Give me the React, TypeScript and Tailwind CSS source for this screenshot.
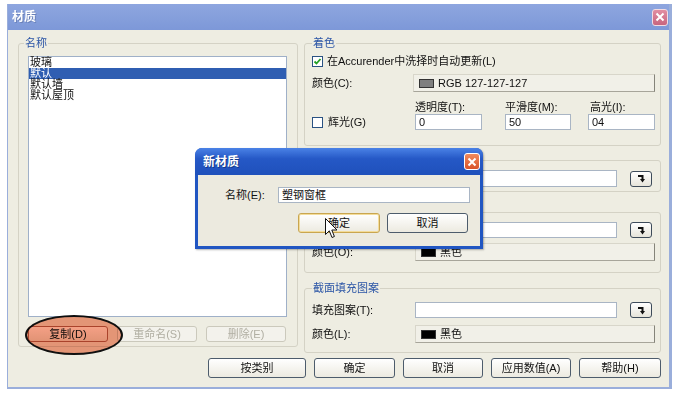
import type { ReactNode } from "react";

function Btn({
  children,
  className = "",
  disabled = false,
  focus = false,
}: {
  children: ReactNode;
  className?: string;
  disabled?: boolean;
  focus?: boolean;
}) {
  return (
    <button
      type="button"
      className={`flex items-center justify-center rounded-[3px] border text-[11px] leading-none ${
        disabled
          ? "border-[#cbc9bc] bg-[#f3f2ec] text-[#b0aea2]"
          : focus
          ? "border-[#c9a650] bg-[linear-gradient(180deg,#ffffff,#eceae0)] text-[#111] shadow-[inset_0_0_0_1px_#f3dc9a]"
          : "border-[#4d5c6c] bg-[linear-gradient(180deg,#ffffff,#eceae0)] text-[#111]"
      } ${className}`}
    >
      {children}
    </button>
  );
}

function Group({
  label,
  className = "",
  legendClass = "ml-0",
  children,
}: {
  label: string;
  className?: string;
  legendClass?: string;
  children: ReactNode;
}) {
  return (
    <fieldset className={`rounded-[3px] border border-[#d4d2c5] ${className}`}>
      <legend className={`px-[1px] text-[11px] leading-[12px] text-[#2b55a6] ${legendClass}`}>
        {label}
      </legend>
      {children}
    </fieldset>
  );
}

function Check({ checked = false }: { checked?: boolean }) {
  return (
    <span className="flex h-[11px] w-[11px] items-center justify-center border border-[#2a5282] bg-white">
      {checked && (
        <svg width="9" height="9" viewBox="0 0 9 9">
          <path d="M1.5 4.5 L3.5 6.5 L7.5 2" fill="none" stroke="#22a024" strokeWidth="1.8" />
        </svg>
      )}
    </span>
  );
}

function Field({ value = "", className = "" }: { value?: string; className?: string }) {
  return (
    <div
      className={`flex items-center border border-[#a9b5c4] bg-white pl-[3px] text-[11px] leading-none text-[#111] ${className}`}
    >
      {value}
    </div>
  );
}

function ColorBtn({ swatch, text }: { swatch: string; text: string }) {
  return (
    <div className="flex h-[18px] flex-1 items-center gap-[4px] border border-[#d8d6ca] border-r-[#85847a] border-b-[#a7a59a] bg-[#f1f0e8] pl-[5px] text-[11px] leading-none text-[#111]">
      <span className={`h-[9px] w-[15px] border border-[#333] ${swatch}`} />
      {text}
    </div>
  );
}

function Browse() {
  return (
    <button
      type="button"
      className="ml-[13px] flex h-[16px] w-[22px] items-center justify-center rounded-[3px] border border-[#3d4b5a] bg-[linear-gradient(180deg,#ffffff,#e6e4da)]"
    >
      <svg width="9" height="9" viewBox="0 0 9 9">
        <path d="M1 2 H5.5 V5" fill="none" stroke="#111" strokeWidth="2" />
        <path d="M3 5 L5.5 8.5 L8 5 Z" fill="#111" />
      </svg>
    </button>
  );
}

const items = ["玻璃", "默认", "默认墙", "默认屋顶"];

export default function App() {
  return (
    <div className="h-[395px] w-[679px] bg-white pl-[7px] pt-[4px] font-[family-name:'Liberation_Sans','Noto_Sans_CJK_SC',sans-serif]">
      <div className="relative flex h-[385px] w-[665px] flex-col border-b-[2px] border-l border-r-[3px] border-[#9aaedb] bg-[#eeede2]">
        {/* title bar */}
        <div className="flex h-[26px] items-center justify-between bg-[linear-gradient(180deg,#8ea6df,#7d98d8)] pl-[4px] pr-[1px]">
          <span className="text-[12px] font-bold text-white [text-shadow:1px_1px_0_#6a80b8]">材质</span>
          <span className="flex h-[17px] w-[16px] items-center justify-center rounded-[3px] border border-[#f2dbe2] bg-[linear-gradient(180deg,#e28ea2,#c8657f)]">
            <svg width="10" height="10" viewBox="0 0 10 10">
              <path d="M1.5 1.5 L8.5 8.5 M8.5 1.5 L1.5 8.5" stroke="#fff" strokeWidth="2" />
            </svg>
          </span>
        </div>

        {/* body */}
        <div className="flex flex-1 flex-col pl-[10px] pr-[8px] pt-[7px]">
          <div className="flex items-start gap-[6px]">
            {/* name list */}
            <Group label="名称" legendClass="ml-[-4px]" className="h-[310px] w-[280px] px-[9px]">
              <div className="mt-[7px] h-[261px] w-[259px] border border-[#9fb0c8] bg-white text-[11px] leading-[11px] text-[#111]">
                {items.map((it) => (
                  <div
                    key={it}
                    className={`pl-[1px] ${it === "默认" ? "bg-[#2f5eb2] text-white" : ""}`}
                  >
                    {it}
                  </div>
                ))}
              </div>
              <div className="mt-[9px] flex gap-[9px]">
                <Btn className="h-[16px] w-[80px] border-[#b26a52]">复制(D)</Btn>
                <Btn disabled className="h-[16px] w-[80px]">重命名(S)</Btn>
                <Btn disabled className="h-[16px] w-[80px]">删除(E)</Btn>
              </div>
            </Group>

            {/* right column */}
            <div className="flex w-[357px] flex-col text-[11px] leading-none text-[#111]">
              <Group label="着色" className="h-[109px] pl-[7px] pr-[5px]">
                <div className="mt-[6px] flex h-[12px] items-center gap-[4px]">
                  <Check checked />
                  <span>在Accurender中洗择时自动更新(L)</span>
                </div>
                <div className="mt-[7px] flex items-center">
                  <span className="w-[101px]">颜色(C):</span>
                  <ColorBtn swatch="bg-[#7f7f7f]" text="RGB 127-127-127" />
                </div>
                <div className="mt-[9px] flex h-[12px] items-center pl-[103px]">
                  <span className="w-[90px]">透明度(T):</span>
                  <span className="w-[85px]">平滑度(M):</span>
                  <span>高光(I):</span>
                </div>
                <div className="mt-[1px] flex items-center">
                  <div className="flex w-[103px] items-center gap-[5px]">
                    <Check />
                    <span>辉光(G)</span>
                  </div>
                  <Field value="0" className="h-[16px] w-[67px]" />
                  <Field value="50" className="ml-[23px] h-[16px] w-[66px]" />
                  <Field value="04" className="ml-[17px] h-[16px] w-[67px]" />
                </div>
              </Group>

              <Group label="渲染材质" className="mt-[8px] h-[38px] pl-[7px] pr-[5px]">
                <div className="mt-[4px] flex items-center">
                  <span className="w-[103px]">渲染材质(R):</span>
                  <Field className="h-[17px] w-[202px]" />
                  <Browse />
                </div>
              </Group>

              <Group label="表面填充图案" className="mt-[14px] h-[67px] pl-[7px] pr-[5px]">
                <div className="mt-[4px] flex items-center">
                  <span className="w-[103px]">填充图案(P):</span>
                  <Field className="h-[16px] w-[202px]" />
                  <Browse />
                </div>
                <div className="mt-[5px] flex items-center">
                  <span className="w-[103px]">颜色(O):</span>
                  <ColorBtn swatch="bg-black" text="黑色" />
                </div>
              </Group>

              <Group label="截面填充图案" className="mt-[9px] h-[71px] pl-[7px] pr-[5px]">
                <div className="mt-[8px] flex items-center">
                  <span className="w-[103px]">填充图案(T):</span>
                  <Field className="h-[16px] w-[202px]" />
                  <Browse />
                </div>
                <div className="mt-[7px] flex items-center">
                  <span className="w-[103px]">颜色(L):</span>
                  <ColorBtn swatch="bg-black" text="黑色" />
                </div>
              </Group>
            </div>
          </div>

          {/* bottom buttons */}
          <div className="mt-[5px] flex justify-end gap-[8px]">
            <Btn className="h-[20px] w-[98px]">按类别</Btn>
            <Btn className="h-[20px] w-[81px]">确定</Btn>
            <Btn className="h-[20px] w-[80px]">取消</Btn>
            <Btn className="h-[20px] w-[80px]">应用数值(A)</Btn>
            <Btn className="h-[20px] w-[82px]">帮助(H)</Btn>
          </div>
        </div>

        {/* annotation around 复制 */}
        <div className="absolute left-[17px] top-[311px] h-[40px] w-[98px] rounded-[50%] border-2 border-[#111] bg-[#f4a085] mix-blend-multiply" />

        {/* new material dialog */}
        <div className="absolute left-[187px] top-[144px] flex h-[101px] w-[288px] flex-col rounded-t-[7px] bg-[#2156c2] shadow-[1px_1px_2px_rgba(0,0,0,0.3)]">
          <div className="flex h-[27px] items-center justify-between rounded-t-[7px] bg-[linear-gradient(180deg,#4a82e6,#2558c6_40%,#1f50bb)] pl-[8px] pr-[3px]">
            <span className="text-[12px] font-bold text-white [text-shadow:1px_1px_0_#123a8a]">新材质</span>
            <span className="flex h-[17px] w-[16px] items-center justify-center rounded-[3px] border border-white bg-[linear-gradient(180deg,#f08a5c,#d9542a)]">
              <svg width="10" height="10" viewBox="0 0 10 10">
                <path d="M1.5 1.5 L8.5 8.5 M8.5 1.5 L1.5 8.5" stroke="#fff" strokeWidth="2" />
              </svg>
            </span>
          </div>
          <div className="mx-[3px] mb-[3px] flex flex-1 flex-col bg-[#eceadf] text-[11px] leading-none text-[#111]">
            <div className="mt-[12px] flex items-center pl-[27px]">
              <span className="w-[53px]">名称(E):</span>
              <Field value="塑钢窗框" className="h-[16px] w-[192px]" />
            </div>
            <div className="mt-[10px] flex justify-end gap-[7px] pr-[12px]">
              <Btn focus className="h-[20px] w-[82px]">确定</Btn>
              <Btn className="h-[20px] w-[81px]">取消</Btn>
            </div>
          </div>
        </div>

        {/* mouse cursor */}
        <svg
          className="absolute left-[317px] top-[214px]"
          width="13"
          height="21"
          viewBox="0 0 13 21"
        >
          <path
            d="M0.5 0.5 V16.5 L4.3 12.8 L7 19.5 L9.4 18.5 L6.8 12 H12 Z"
            fill="#fff"
            stroke="#111"
            strokeWidth="1"
          />
        </svg>
      </div>
    </div>
  );
}
